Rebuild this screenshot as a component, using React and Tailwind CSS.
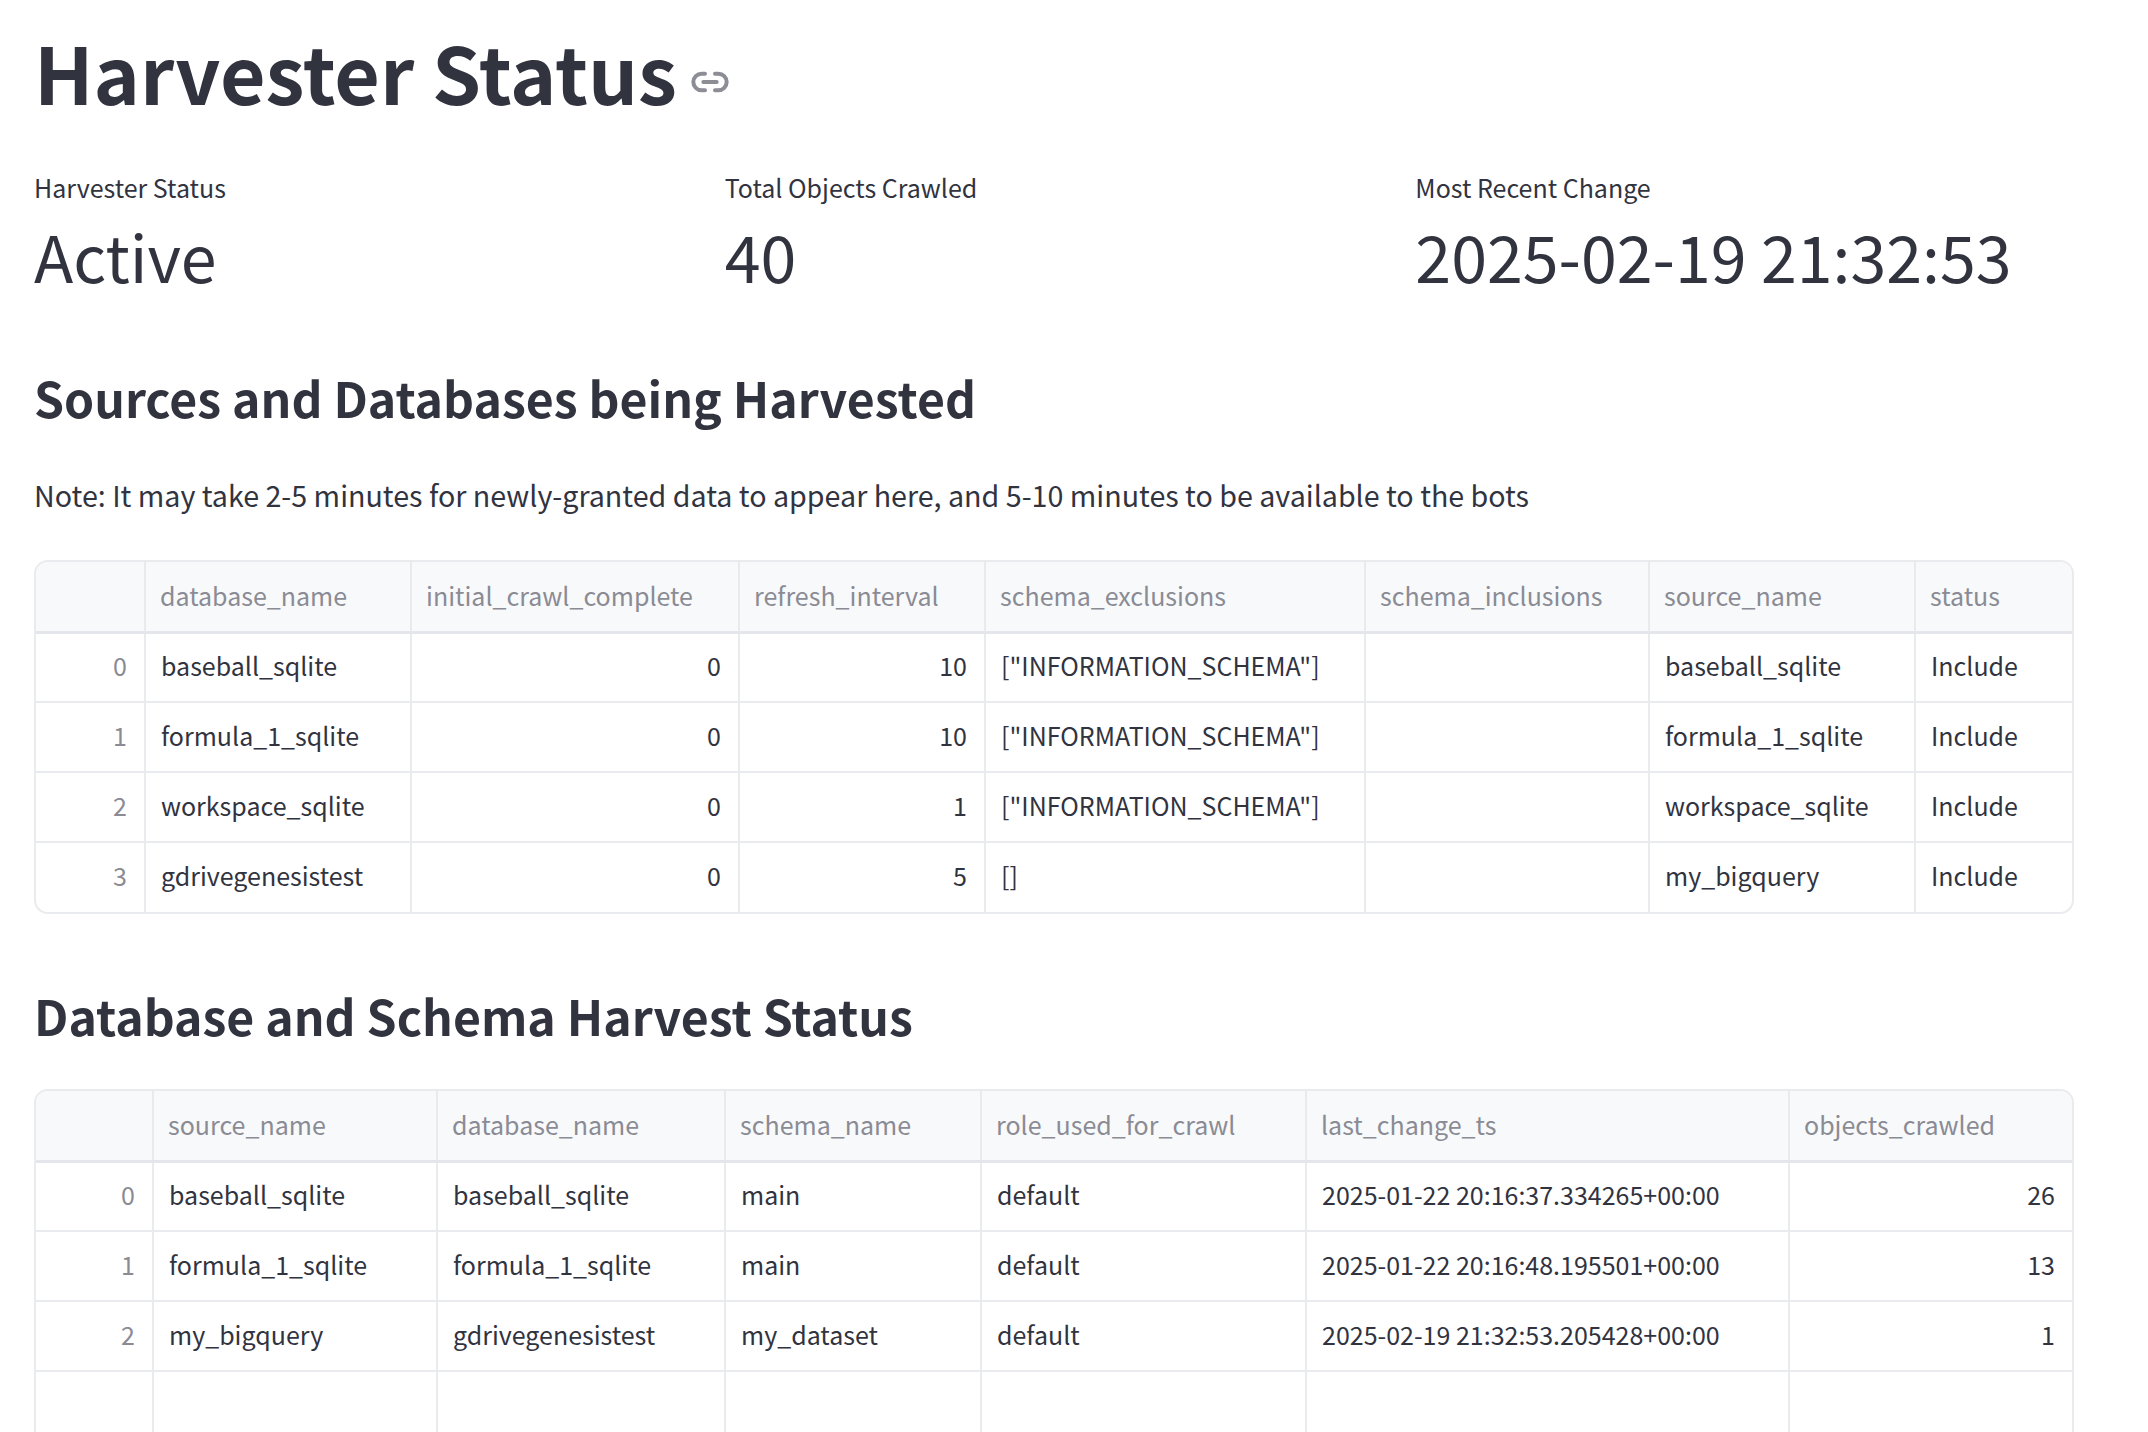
import { Link2 } from "lucide-react";

const sourceColumns = [
  { name: "database_name", width: "w-[266px]" },
  { name: "initial_crawl_complete", width: "w-[328px]", right: true },
  { name: "refresh_interval", width: "w-[246px]", right: true },
  { name: "schema_exclusions", width: "w-[380px]" },
  { name: "schema_inclusions", width: "w-[284px]" },
  { name: "source_name", width: "w-[266px]" },
  { name: "status", width: "w-[160px]" },
];

const sourceRows = [
  ["baseball_sqlite", "0", "10", '["INFORMATION_SCHEMA"]', "", "baseball_sqlite", "Include"],
  ["formula_1_sqlite", "0", "10", '["INFORMATION_SCHEMA"]', "", "formula_1_sqlite", "Include"],
  ["workspace_sqlite", "0", "1", '["INFORMATION_SCHEMA"]', "", "workspace_sqlite", "Include"],
  ["gdrivegenesistest", "0", "5", "[]", "", "my_bigquery", "Include"],
];

const schemaColumns = [
  { name: "source_name", width: "w-[284px]" },
  { name: "database_name", width: "w-[288px]" },
  { name: "schema_name", width: "w-[256px]" },
  { name: "role_used_for_crawl", width: "w-[325px]" },
  { name: "last_change_ts", width: "w-[483px]" },
  { name: "objects_crawled", width: "w-[286px]", right: true },
];

const schemaRows = [
  ["baseball_sqlite", "baseball_sqlite", "main", "default", "2025-01-22 20:16:37.334265+00:00", "26"],
  ["formula_1_sqlite", "formula_1_sqlite", "main", "default", "2025-01-22 20:16:48.195501+00:00", "13"],
  ["my_bigquery", "gdrivegenesistest", "my_dataset", "default", "2025-02-19 21:32:53.205428+00:00", "1"],
  ["", "", "", "", "", ""],
];

function DataTable({ columns, rows, indexWidth, className = "" }) {
  return (
    <div className={`overflow-hidden rounded-t-[14px] border-2 border-[#eaebee] ${className}`}>
      <table className="w-full table-fixed border-collapse text-[25px]">
        <colgroup>
          <col className={indexWidth} />
          {columns.map((col) => (
            <col key={col.name} className={col.width} />
          ))}
        </colgroup>
        <thead>
          <tr className="h-[70px] border-b-[3px] border-[#e4e6eb] bg-[#f8f9fb] text-[#8a8b94]">
            <th className="border-r-2 border-[#e9eaee]" />
            {columns.map((col) => (
              <th key={col.name} className="border-r-2 border-[#e9eaee] pb-[2px] pl-[14px] text-left font-normal last:border-r-0">
                {col.name}
              </th>
            ))}
          </tr>
        </thead>
        <tbody>
          {rows.map((row, i) => (
            <tr key={i} className="h-[70px] border-b-2 border-[#eaebee] last:border-b-0">
              <td className="border-r-2 border-[#eaebee] pb-[3px] pr-[17px] text-right text-[#8a8b94]">
                {row[0] !== "" ? i : ""}
              </td>
              {row.map((cell, j) => (
                <td
                  key={j}
                  className={`border-r-2 border-[#eaebee] pb-[3px] last:border-r-0 last:pr-[20px] ${columns[j].right ? "pr-[17px] text-right" : "pl-[15px] text-left"}`}
                >
                  {cell}
                </td>
              ))}
            </tr>
          ))}
        </tbody>
      </table>
    </div>
  );
}

function Metric({ label, value }) {
  return (
    <div>
      <div className="text-[25px] leading-[40px]">{label}</div>
      <div className="mt-[3px] text-[64.5px] leading-[90px]">{value}</div>
    </div>
  );
}

export default function App() {
  return (
    <div className="h-[1432px] overflow-hidden bg-white pl-[34px] pr-[74px] font-['Noto_Sans_CJK_SC','Noto_Sans',sans-serif] text-[#31333f]">
      <div className="flex items-center pt-[19px]">
        <h1 className="text-[78.6px] font-bold leading-[104px]">Harvester Status</h1>
        <Link2 className="ml-[13px] mt-[22px] text-[#8c8d95]" size={40} strokeWidth={2.4} />
      </div>

      <div className="mt-[44px] grid grid-cols-3 gap-[32px]">
        <Metric label="Harvester Status" value="Active" />
        <Metric label="Total Objects Crawled" value="40" />
        <Metric label="Most Recent Change" value="2025-02-19 21:32:53" />
      </div>

      <h3 className="mt-[62px] text-[48.2px] font-bold leading-[70px]">Sources and Databases being Harvested</h3>
      <p className="mt-[39px] text-[28.65px] leading-[48px]">
        Note: It may take 2-5 minutes for newly-granted data to appear here, and 5-10 minutes to be available to the bots
      </p>

      <DataTable className="mt-[41px] rounded-b-[14px]" columns={sourceColumns} rows={sourceRows} indexWidth="w-[109px]" />

      <h3 className="mt-[66px] text-[48.2px] font-bold leading-[70px]">Database and Schema Harvest Status</h3>

      <DataTable className="mt-[39px]" columns={schemaColumns} rows={schemaRows} indexWidth="w-[117px]" />
    </div>
  );
}
